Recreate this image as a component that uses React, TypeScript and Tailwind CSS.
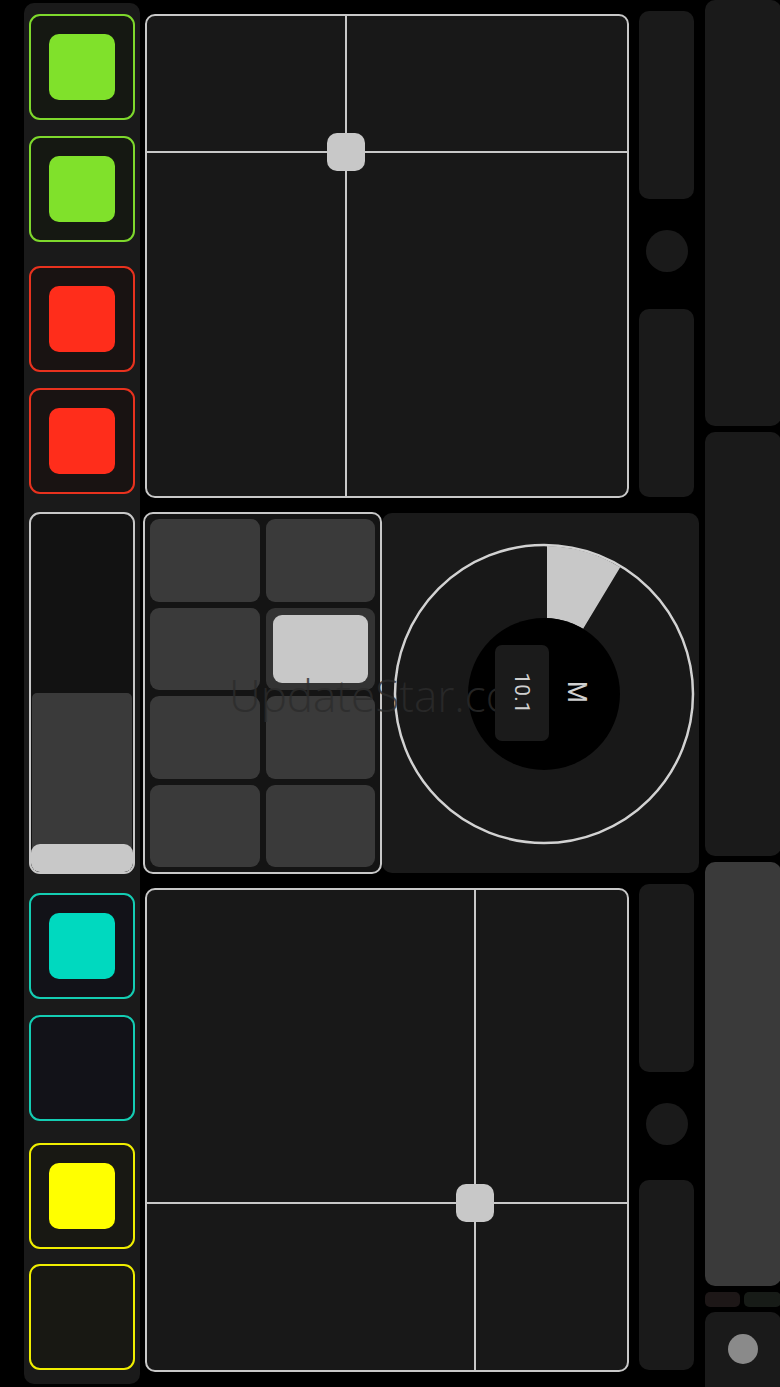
import React from "react";

type BtnProps = { border: string; bg: string; fill?: string; mt: string };

function Pad({ border, bg, fill, mt }: BtnProps) {
  return (
    <div
      className={`${mt} w-[106px] h-[106px] rounded-[11px] border-2 ${border} ${bg} flex items-center justify-center shrink-0`}
    >
      {fill ? <div className={`w-[66px] h-[66px] rounded-[10px] ${fill}`} /> : null}
    </div>
  );
}

function XYPad({ vx, hy, mt }: { vx: number; hy: number; mt: string }) {
  return (
    <div className={`${mt} ml-[2px] w-[484px] h-[484px] rounded-[10px] border-2 border-[#c8c8c8] bg-[#181818] relative overflow-hidden shrink-0`}>
      <div className="absolute top-0 bottom-0 w-[2px] bg-[#c8c8c8]" style={{ left: vx - 1 }} />
      <div className="absolute left-0 right-0 h-[2px] bg-[#c8c8c8]" style={{ top: hy - 1 }} />
      <div
        className="absolute w-[38px] h-[38px] rounded-[10px] bg-[#c8c8c8]"
        style={{ left: vx - 19, top: hy - 19 }}
      />
    </div>
  );
}

function SideCol({ pt, pb, h2, circ }: { pt: string; pb: string; h2: string; circ: string }) {
  return (
    <div className={`ml-[10px] w-[55px] flex flex-col ${pt} ${pb} shrink-0`}>
      <div className="h-[188px] rounded-[10px] bg-[#1a1a1a] shrink-0" />
      <div className="flex-1 flex items-center justify-center">
        <div className={`w-[42px] h-[42px] rounded-full bg-[#1a1a1a] ${circ}`} />
      </div>
      <div className={`${h2} rounded-[10px] bg-[#1a1a1a] shrink-0`} />
    </div>
  );
}

const CX = 162;
const CY = 181;

function Knob() {
  const a = (31 * Math.PI) / 180;
  const ro = 148;
  const ri = 76;
  const sx = CX + 3;
  const ox = CX + ro * Math.sin(a);
  const oy = CY - ro * Math.cos(a);
  const ix = CX + ri * Math.sin(a);
  const iy = CY - ri * Math.cos(a);
  const d = `M ${sx} ${CY - ro} A ${ro} ${ro} 0 0 1 ${ox} ${oy} L ${ix} ${iy} A ${ri} ${ri} 0 0 0 ${sx} ${CY - ri} Z`;
  return (
    <svg width="317" height="360" viewBox="0 0 317 360" className="block">
      <circle cx={CX} cy={CY} r={149} fill="#181818" stroke="#d2d2d2" strokeWidth={2.5} />
      <path d={d} fill="#c8c8c8" />
      <circle cx={CX} cy={CY} r={ri} fill="#000" />
    </svg>
  );
}

function KnobLabels() {
  return (
    <svg width="317" height="360" viewBox="0 0 317 360" className="absolute left-0 top-0 z-10 pointer-events-none">
      <rect x={CX - 49} y={CY - 49} width={54} height={96} rx={7} fill="#1b1b1b" />
      <text
        x={0}
        y={0}
        transform={`translate(${CX - 29} ${CY - 1}) rotate(90)`}
        textAnchor="middle"
        fontFamily="Roboto, 'Liberation Sans', sans-serif"
        fontSize={21}
        fill="#d0d0d0"
      >
        10.1
      </text>
      <text
        x={0}
        y={0}
        transform={`translate(${CX + 24} ${CY - 2}) rotate(90)`}
        textAnchor="middle"
        fontFamily="Roboto, 'Liberation Sans', sans-serif"
        fontSize={25}
        fill="#d0d0d0"
      >
        M
      </text>
    </svg>
  );
}

export default function App() {
  const cells = [0, 1, 2, 3, 4, 5, 6, 7];
  return (
    <div
      className="w-[780px] h-[1387px] bg-black flex relative overflow-hidden"
      style={{ fontFamily: "'Open Sans', sans-serif" }}
    >
      {/* Left column */}
      <div className="ml-[24px] mt-[3px] w-[116px] h-[1381px] rounded-[10px] bg-[#1a1a1a] flex flex-col items-center pt-[11px] shrink-0">
        <Pad mt="mt-0" border="border-[#7ed82c]" bg="bg-[#151812]" fill="bg-[#80e12b]" />
        <Pad mt="mt-[16px]" border="border-[#7ed82c]" bg="bg-[#151812]" fill="bg-[#80e12b]" />
        <Pad mt="mt-[24px]" border="border-[#e8321e]" bg="bg-[#191312]" fill="bg-[#ff2d1b]" />
        <Pad mt="mt-[16px]" border="border-[#e8321e]" bg="bg-[#191312]" fill="bg-[#ff2d1b]" />
        {/* Fader */}
        <div className="mt-[18px] w-[106px] h-[362px] rounded-[11px] border-2 border-[#c8c8c8] bg-[#121212] flex flex-col justify-end overflow-hidden shrink-0">
          <div className="h-[179px] mx-[1px] rounded-t-[5px] bg-[#3a3a3a] flex flex-col justify-end">
            <div className="h-[28px] rounded-t-[9px] rounded-b-[8px] bg-[#c8c8c8] mx-[-1px]" />
          </div>
        </div>
        <Pad mt="mt-[19px]" border="border-[#14cdb3]" bg="bg-[#121218]" fill="bg-[#00d9bf]" />
        <Pad mt="mt-[16px]" border="border-[#14cdb3]" bg="bg-[#121218]" />
        <Pad mt="mt-[22px]" border="border-[#f0ee00]" bg="bg-[#181813]" fill="bg-[#ffff00]" />
        <Pad mt="mt-[15px]" border="border-[#f0ee00]" bg="bg-[#181813]" />
      </div>

      {/* Center column */}
      <div className="ml-[3px] w-[557px] flex flex-col shrink-0">
        <div className="h-[512px] flex shrink-0">
          <XYPad vx={199} hy={136} mt="mt-[14px]" />
          <SideCol pt="pt-[11px]" pb="pb-[15px]" h2="h-[188px]" circ="mb-[6px]" />
        </div>
        <div className="h-[362px] flex shrink-0">
          <div className="w-[239px] h-[362px] rounded-[10px] border-2 border-[#c8c8c8] bg-[#141414] p-[5px] grid grid-cols-2 grid-rows-4 gap-[6px] shrink-0">
            {cells.map((i) =>
              i === 3 ? (
                <div key={i} className="rounded-[9px] bg-[#333333] p-[7px]">
                  <div className="w-full h-full rounded-[9px] bg-[#c8c8c8]" />
                </div>
              ) : (
                <div key={i} className="rounded-[9px] bg-[#3a3a3a]" />
              )
            )}
          </div>
          <div className="mt-[1px] w-[317px] h-[360px] rounded-[10px] bg-[#1a1a1a] overflow-hidden relative shrink-0">
            <Knob />
            <KnobLabels />
          </div>
        </div>
        <div className="h-[513px] flex shrink-0">
          <XYPad vx={328} hy={313} mt="mt-[14px]" />
          <SideCol pt="pt-[10px]" pb="pb-[17px]" h2="h-[190px]" circ="mb-[4px]" />
        </div>
      </div>

      {/* Far right column */}
      <div className="ml-[5px] w-[76px] flex flex-col shrink-0">
        <div className="h-[426px] rounded-[10px] bg-[#1a1a1a] shrink-0" />
        <div className="mt-[6px] h-[424px] rounded-[10px] bg-[#1a1a1a] shrink-0" />
        <div className="mt-[6px] h-[424px] rounded-[10px] bg-[#3a3a3a] shrink-0" />
        <div className="mt-[6px] h-[15px] flex gap-[4px] shrink-0">
          <div className="w-[35px] rounded-[5px] bg-[#1d1717]" />
          <div className="flex-1 rounded-[5px] bg-[#171b17]" />
        </div>
        <div className="mt-[5px] h-[90px] rounded-[10px] bg-[#1a1a1a] flex justify-center pt-[22px] shrink-0">
          <div className="w-[30px] h-[30px] rounded-full bg-[#8a8a8a]" />
        </div>
      </div>

      {/* Watermark overlay */}
      <div
        className="absolute left-[229px] top-[673px] z-[5] text-[44px] leading-none text-[#2c2c2c] opacity-80 pointer-events-none select-none"
        style={{ fontFamily: "'Open Sans', sans-serif", fontWeight: 300 }}
      >
        UpdateStar.com
      </div>
    </div>
  );
}
